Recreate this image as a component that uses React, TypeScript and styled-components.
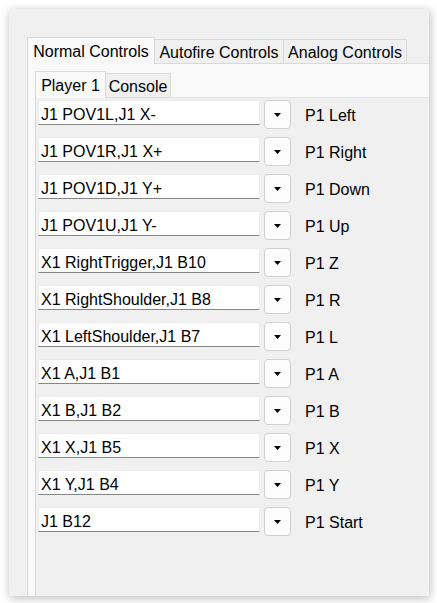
import React from "react";
import styled, { createGlobalStyle } from "styled-components";

const Global = createGlobalStyle`
  html, body { margin: 0; padding: 0; background: #ffffff; }
  body { font-family: "Liberation Sans", Arial, sans-serif; font-size: 16px; color: #000; }
`;

const Page = styled.div`
  padding: 9px 8px 7px 9px;
`;

const Window = styled.div`
  width: 420px;
  height: 587px;
  background: #f0f0f0;
  box-shadow: 1px 2px 9px rgba(0, 0, 0, 0.28);
  overflow: hidden;
  display: flex;
  flex-direction: column;
  padding: 28px 0 0 18px;
  box-sizing: border-box;
`;

const TabStrip = styled.div<{ $h: number }>`
  display: flex;
  align-items: flex-end;
  height: ${(p) => p.$h}px;
  flex: none;
`;

const Tab = styled.div<{ $active?: boolean; $w: number; $bg: string }>`
  box-sizing: border-box;
  width: ${(p) => p.$w}px;
  height: ${(p) => (p.$active ? 27 : 25)}px;
  margin-right: -1px;
  padding-top: ${(p) => (p.$active ? 5 : 4)}px;
  line-height: 18px;
  text-align: center;
  white-space: nowrap;
  border: 1px solid #d9d9d9;
  border-bottom: ${(p) => (p.$active ? "none" : "1px solid #d9d9d9")};
  background: ${(p) => (p.$active ? p.$bg : "#f0f0f0")};
`;

const Filler = styled.div`
  flex: 1;
  align-self: stretch;
  border-bottom: 1px solid #e3e3e3;
`;

const OuterPane = styled.div`
  flex: 1;
  display: flex;
  flex-direction: column;
  background: #f9f9f9;
  border-left: 1px solid #d9d9d9;
  padding: 7px 0 0 7px;
  min-height: 0;
`;

const InnerPane = styled.div`
  flex: 1;
  background: #f0f0f0;
  border-left: 1px solid #d9d9d9;
  padding: 2px 0 0 2px;
  display: flex;
  flex-direction: column;
  gap: 8px;
`;

const Row = styled.div`
  display: flex;
  align-items: flex-start;
  height: 29px;
`;

const Field = styled.div`
  box-sizing: border-box;
  width: 222px;
  height: 25px;
  background: #ffffff;
  border: 1px solid #ececec;
  border-bottom: 1px solid #868686;
  padding: 5px 0 0 2px;
  line-height: 18px;
  white-space: nowrap;
  overflow: hidden;
`;

const DropButton = styled.div`
  box-sizing: border-box;
  width: 27px;
  height: 29px;
  margin-left: 4px;
  background: #fdfdfd;
  border: 1px solid #d0d0d0;
  border-radius: 4px;
  display: flex;
  align-items: center;
  justify-content: center;
`;

const Label = styled.div`
  margin: 7px 0 0 14px;
  line-height: 18px;
  white-space: nowrap;
`;

const rows: [string, string][] = [
  ["J1 POV1L,J1 X-", "P1 Left"],
  ["J1 POV1R,J1 X+", "P1 Right"],
  ["J1 POV1D,J1 Y+", "P1 Down"],
  ["J1 POV1U,J1 Y-", "P1 Up"],
  ["X1 RightTrigger,J1 B10", "P1 Z"],
  ["X1 RightShoulder,J1 B8", "P1 R"],
  ["X1 LeftShoulder,J1 B7", "P1 L"],
  ["X1 A,J1 B1", "P1 A"],
  ["X1 B,J1 B2", "P1 B"],
  ["X1 X,J1 B5", "P1 X"],
  ["X1 Y,J1 B4", "P1 Y"],
  ["J1 B12", "P1 Start"],
];

const Arrow = () => (
  <svg width="7" height="4" viewBox="0 0 7 4">
    <polygon points="0,0 7,0 3.5,4" fill="#000" />
  </svg>
);

export default function App() {
  return (
    <Page>
      <Global />
      <Window>
        <TabStrip $h={27}>
          <Tab $active $w={128} $bg="#f9f9f9">Normal Controls</Tab>
          <Tab $w={130} $bg="#f9f9f9">Autofire Controls</Tab>
          <Tab $w={124} $bg="#f9f9f9">Analog Controls</Tab>
          <Filler />
        </TabStrip>
        <OuterPane>
          <TabStrip $h={27}>
            <Tab $active $w={71} $bg="#f9f9f9">Player 1</Tab>
            <Tab $w={66} $bg="#f0f0f0">Console</Tab>
            <Filler />
          </TabStrip>
          <InnerPane>
            {rows.map(([v, l]) => (
              <Row key={l}>
                <Field>{v}</Field>
                <DropButton>
                  <Arrow />
                </DropButton>
                <Label>{l}</Label>
              </Row>
            ))}
          </InnerPane>
        </OuterPane>
      </Window>
    </Page>
  );
}
